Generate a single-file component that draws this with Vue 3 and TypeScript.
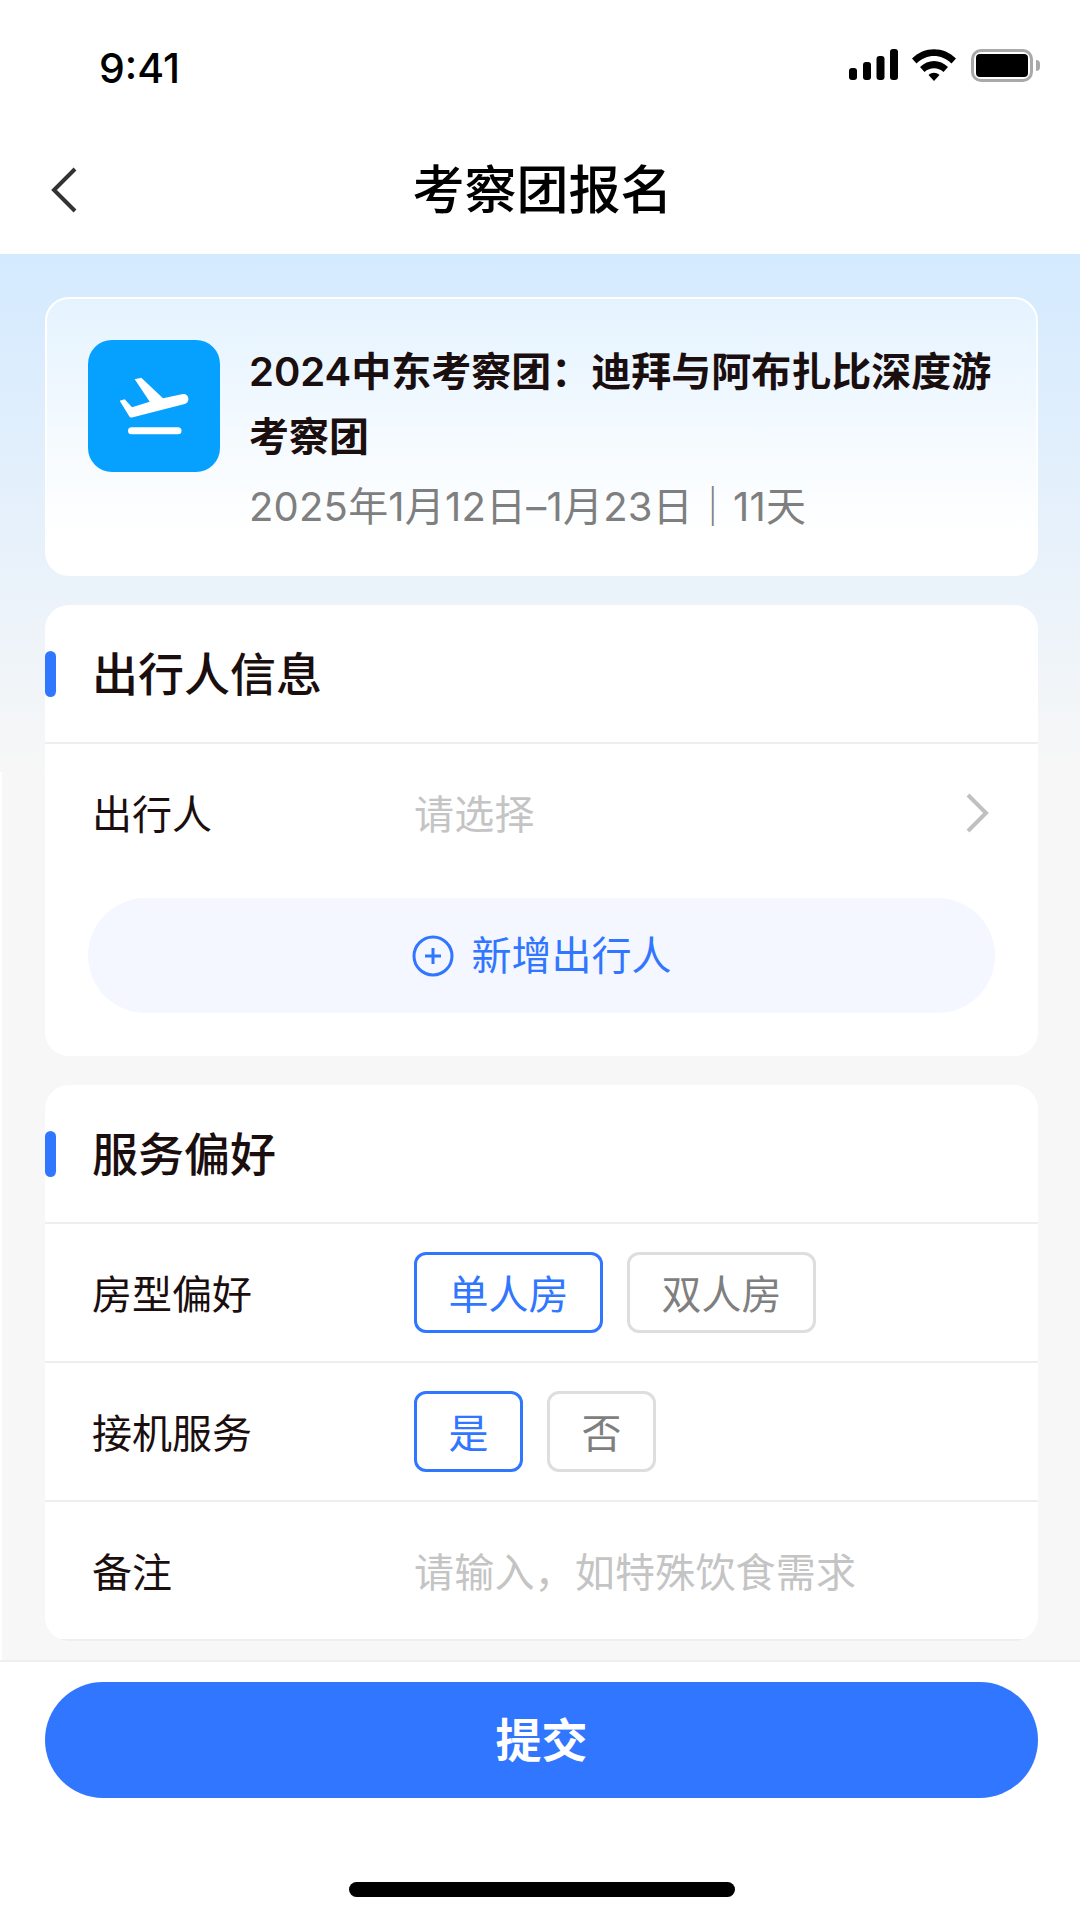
<script setup lang="ts">
interface Option {
  label: string
  active?: boolean
}

const roomOptions: Option[] = [
  { label: '单人房', active: true },
  { label: '双人房' }
]

const pickupOptions: Option[] = [
  { label: '是', active: true },
  { label: '否' }
]
</script>

<template>
  <div class="page">
    <div class="status-bar">
      <span class="time">9:41</span>
      <div class="status-icons">
        <svg class="signal" width="50" height="32" viewBox="0 0 50 32">
          <rect x="0" y="19" width="8" height="12" rx="3" />
          <rect x="14" y="13" width="8" height="18" rx="3" />
          <rect x="27.5" y="7" width="8" height="24" rx="3" />
          <rect x="41" y="0" width="8" height="31" rx="3" />
        </svg>
        <svg class="wifi" width="44" height="32" viewBox="0 0 44 32">
          <path d="M0 9.5C12-3 32-3 44 9.5L39.5 14.5C29.5 4.5 14.5 4.5 4.5 14.5Z" />
          <path d="M8 18C16 10 28 10 36 18L31.5 23C26 18 18 18 12.5 23Z" />
          <path d="M16.5 26C20 23 24 23 27.5 26L22 32Z" />
        </svg>
        <div class="battery">
          <div class="battery-body"><div class="battery-fill"></div></div>
          <div class="battery-cap"></div>
        </div>
      </div>
    </div>

    <header class="nav">
      <svg class="back" width="26" height="46" viewBox="0 0 26 46">
        <path d="M24 2L3 23L24 44" />
      </svg>
      <h1 class="nav-title">考察团报名</h1>
    </header>

    <main class="content">
      <section class="trip-card">
        <div class="trip-icon">
          <svg width="132" height="132" viewBox="0 0 132 132">
            <path d="M46.7 39.3L53.3 37.7L75 58.3L95 54C98 53.4 100.4 56 100.4 59C100.4 61.5 99 63.3 96.7 64L44 77.4C42.8 77.7 41.8 77.2 41.2 76.2L31.7 60.7L36.7 59.3L44 67.3L61.7 61.7Z" />
            <rect x="40" y="87.3" width="53.5" height="7" rx="3.5" />
          </svg>
        </div>
        <div class="trip-info">
          <h2 class="trip-title">2024中东考察团：迪拜与阿布扎比深度游考察团</h2>
          <p class="trip-date">2025年1月12日–1月23日｜11天</p>
        </div>
      </section>

      <section class="card">
        <div class="card-header">
          <span class="accent"></span>
          <h3>出行人信息</h3>
        </div>
        <div class="row traveler-row">
          <span class="label">出行人</span>
          <span class="placeholder">请选择</span>
          <svg class="chevron" width="24" height="40" viewBox="0 0 24 40">
            <path d="M3 2L21 20L3 38" />
          </svg>
        </div>
        <button class="add-btn">
          <svg width="42" height="42" viewBox="0 0 42 42">
            <circle cx="21" cy="21" r="19" />
            <path d="M21 13V29M13 21H29" />
          </svg>
          <span>新增出行人</span>
        </button>
      </section>

      <section class="card">
        <div class="card-header">
          <span class="accent"></span>
          <h3>服务偏好</h3>
        </div>
        <div class="row pref-row">
          <span class="label">房型偏好</span>
          <div class="options">
            <span v-for="o in roomOptions" :key="o.label" class="option" :class="{ active: o.active }">{{ o.label }}</span>
          </div>
        </div>
        <div class="row pref-row">
          <span class="label">接机服务</span>
          <div class="options">
            <span v-for="o in pickupOptions" :key="o.label" class="option" :class="{ active: o.active }">{{ o.label }}</span>
          </div>
        </div>
        <div class="row pref-row">
          <span class="label">备注</span>
          <span class="placeholder">请输入，如特殊饮食需求</span>
        </div>
      </section>
    </main>

    <footer class="footer">
      <button class="submit">提交</button>
      <div class="home-indicator"></div>
    </footer>
  </div>
</template>

<style>
html,
body {
  margin: 0;
  background: #fff;
}
</style>

<style scoped>
.page {
  width: 1080px;
  height: 1920px;
  display: flex;
  flex-direction: column;
  overflow: hidden;
  background: #fff;
  font-family: Inter, "Noto Sans CJK SC", sans-serif;
  color: #1a0e0e;
}

.status-bar {
  height: 127px;
  flex: none;
  display: flex;
  justify-content: space-between;
  padding: 0 40px 0 99px;
  box-sizing: border-box;
}

.time {
  margin-top: 44px;
  font-size: 41px;
  line-height: 48px;
  font-weight: 500;
  color: #000;
}

.status-icons {
  margin-top: 49px;
  display: flex;
  align-items: flex-start;
}

.signal,
.wifi {
  fill: #000;
}

.wifi {
  margin-left: 13px;
}

.battery {
  margin-left: 15px;
  display: flex;
  align-items: center;
}

.battery-body {
  width: 62px;
  height: 33px;
  box-sizing: border-box;
  border: 3px solid #a9a9a9;
  border-radius: 10px;
  padding: 2px;
}

.battery-fill {
  height: 100%;
  border-radius: 4px;
  background: #000;
}

.battery-cap {
  width: 4px;
  height: 11px;
  margin-left: 3px;
  border-radius: 0 4px 4px 0;
  background: #a9a9a9;
}

.nav {
  height: 127px;
  flex: none;
  display: flex;
  align-items: center;
  justify-content: center;
  padding-left: 5px;
  position: relative;
}

.back {
  position: absolute;
  left: 51px;
  top: 40px;
  fill: none;
  stroke: #333;
  stroke-width: 4;
}

.nav-title {
  margin: 0;
  font-size: 52px;
  line-height: 72px;
  font-weight: 500;
  color: #000;
}

.content {
  flex: 1;
  min-height: 0;
  box-sizing: border-box;
  padding: 43px 42px 18px 45px;
  display: flex;
  flex-direction: column;
  gap: 29px;
  background:
    linear-gradient(#d4eaff, #f7f7f7) 0 0 / 100% 518px no-repeat,
    linear-gradient(#f7f7f7, #f7f7f7) 2px 0 no-repeat;
}

.trip-card {
  height: 279px;
  flex: none;
  box-sizing: border-box;
  border: 2px solid #fff;
  border-radius: 24px;
  padding: 40px 40px 0 41px;
  display: flex;
  gap: 29px;
  background: linear-gradient(#e5f3ff, #fff 85%);
}

.trip-icon {
  width: 132px;
  height: 132px;
  flex: none;
  margin-top: 1px;
  border-radius: 24px;
  background: #06a0ff;
  fill: #fff;
}

.trip-icon svg {
  display: block;
}

.trip-info {
  min-width: 0;
}

.trip-title {
  margin: 0;
  font-size: 40px;
  line-height: 65px;
  font-weight: 600;
}

.trip-date {
  margin: 10px 0 0;
  font-size: 40px;
  line-height: 56px;
  letter-spacing: 0.2px;
  color: #7f7f7f;
}

.card {
  flex: none;
  border-radius: 24px;
  background: #fff;
  overflow: hidden;
}

.card-header {
  height: 139px;
  box-sizing: border-box;
  display: flex;
  align-items: center;
  gap: 36px;
  border-bottom: 2px solid #eee;
}

.accent {
  width: 11px;
  height: 46px;
  border-radius: 6px;
  background: #3176ff;
}

.card-header h3 {
  margin: 0;
  font-size: 46px;
  line-height: 64px;
  font-weight: 500;
}

.row {
  display: flex;
  align-items: center;
  padding: 0 49px 0 47px;
  box-sizing: border-box;
}

.traveler-row {
  height: 137px;
}

.pref-row {
  height: 139px;
  border-bottom: 2px solid #eee;
}

.label {
  width: 322px;
  flex: none;
  padding-top: 4px;
  font-size: 40px;
  line-height: 56px;
}

.placeholder {
  padding-top: 4px;
  font-size: 40px;
  line-height: 56px;
  letter-spacing: 0.2px;
  color: #c4c4c4;
}

.chevron {
  margin-left: auto;
  fill: none;
  stroke: #c0c0c0;
  stroke-width: 4;
}

.add-btn {
  display: flex;
  align-items: center;
  justify-content: center;
  gap: 18px;
  width: 907px;
  height: 115px;
  margin: 17px 43px 43px;
  padding: 0;
  border: 0;
  border-radius: 58px;
  background: #f4f7ff;
  font-family: inherit;
  font-size: 40px;
  line-height: 56px;
  color: #3176ff;
}

.add-btn svg {
  fill: none;
  stroke: #3176ff;
  stroke-width: 3;
}

.options {
  display: flex;
  gap: 24px;
}

.option {
  display: flex;
  align-items: center;
  box-sizing: border-box;
  height: 81px;
  padding: 4px 31.5px 0;
  border: 3px solid #dedede;
  border-radius: 12px;
  font-size: 40px;
  line-height: 56px;
  color: #7f7f7f;
}

.option.active {
  border-color: #3176ff;
  color: #3176ff;
}

.footer {
  height: 260px;
  flex: none;
  box-sizing: border-box;
  border-top: 2px solid #eee;
  padding: 20px 42px 0 45px;
  display: flex;
  flex-direction: column;
  align-items: center;
  background: #fff;
}

.submit {
  width: 993px;
  height: 116px;
  flex: none;
  border: 0;
  padding: 0;
  border-radius: 58px;
  background: #3176ff;
  font-family: inherit;
  font-size: 46px;
  line-height: 64px;
  font-weight: 700;
  color: #fff;
}

.home-indicator {
  width: 386px;
  height: 15px;
  margin-top: 84px;
  border-radius: 8px;
  background: #000;
}
</style>
